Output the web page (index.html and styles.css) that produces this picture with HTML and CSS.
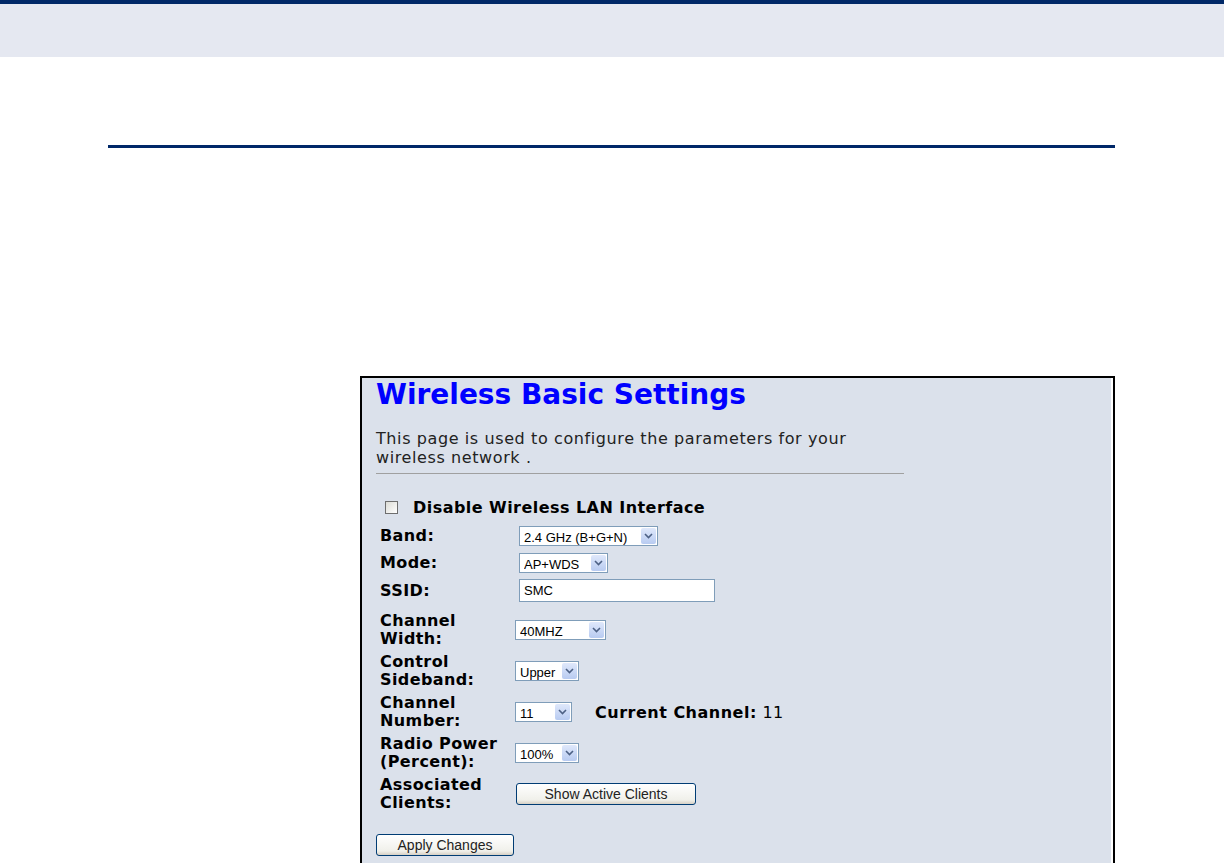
FILE: index.html
```html
<!DOCTYPE html>
<html lang="en">
<head>
    <meta charset="UTF-8">
    <title>Wireless Basic Settings</title>
    <link rel="stylesheet" href="styles.css">
</head>
<body>
    <div class="top-band"></div>
    <div class="page">
        <div class="rule"></div>
        <div class="shot">
            <div class="shot-inner">
                <h1>Wireless Basic Settings</h1>
                <p class="intro">This page is used to configure the parameters for your<br>wireless network .</p>
                <hr>
                <label class="disable-row">
                    <input type="checkbox" class="check">
                    <span>Disable Wireless LAN Interface</span>
                </label>
                <div class="form-grid first">
                    <div class="lbl">Band:</div>
                    <div class="ctl">
                        <span class="select w-band">
                            <select><option>2.4 GHz (B+G+N)</option></select>
                            <span class="arrow"><svg width="9" height="6" viewBox="0 0 9 6"><path d="M1 1 L4.5 4.5 L8 1" fill="none" stroke="#4d6185" stroke-width="1.6"/></svg></span>
                        </span>
                    </div>
                    <div class="lbl">Mode:</div>
                    <div class="ctl">
                        <span class="select w-mode">
                            <select><option>AP+WDS</option></select>
                            <span class="arrow"><svg width="9" height="6" viewBox="0 0 9 6"><path d="M1 1 L4.5 4.5 L8 1" fill="none" stroke="#4d6185" stroke-width="1.6"/></svg></span>
                        </span>
                    </div>
                    <div class="lbl">SSID:</div>
                    <div class="ctl"><input type="text" class="text-in" value="SMC"></div>
                </div>
                <div class="form-grid second">
                    <div class="lbl">Channel<br>Width:</div>
                    <div class="ctl">
                        <span class="select w-width">
                            <select><option>40MHZ</option></select>
                            <span class="arrow"><svg width="9" height="6" viewBox="0 0 9 6"><path d="M1 1 L4.5 4.5 L8 1" fill="none" stroke="#4d6185" stroke-width="1.6"/></svg></span>
                        </span>
                    </div>
                    <div class="lbl">Control<br>Sideband:</div>
                    <div class="ctl">
                        <span class="select w-side">
                            <select><option>Upper</option></select>
                            <span class="arrow"><svg width="9" height="6" viewBox="0 0 9 6"><path d="M1 1 L4.5 4.5 L8 1" fill="none" stroke="#4d6185" stroke-width="1.6"/></svg></span>
                        </span>
                    </div>
                    <div class="lbl">Channel<br>Number:</div>
                    <div class="ctl">
                        <span class="select w-chan">
                            <select><option>11</option></select>
                            <span class="arrow"><svg width="9" height="6" viewBox="0 0 9 6"><path d="M1 1 L4.5 4.5 L8 1" fill="none" stroke="#4d6185" stroke-width="1.6"/></svg></span>
                        </span>
                        <span class="current"><b>Current Channel:</b> 11</span>
                    </div>
                    <div class="lbl">Radio Power<br>(Percent):</div>
                    <div class="ctl">
                        <span class="select w-power">
                            <select><option>100%</option></select>
                            <span class="arrow"><svg width="9" height="6" viewBox="0 0 9 6"><path d="M1 1 L4.5 4.5 L8 1" fill="none" stroke="#4d6185" stroke-width="1.6"/></svg></span>
                        </span>
                    </div>
                    <div class="lbl">Associated<br>Clients:</div>
                    <div class="ctl"><button class="btn w-clients">Show Active Clients</button></div>
                </div>
                <button class="btn w-apply">Apply Changes</button>
            </div>
        </div>
    </div>
</body>
</html>
```

FILE: styles.css
```css
body {
    margin: 0;
    background-color: #fff;
    font-family: "DejaVu Sans", Verdana, sans-serif;
    color: #000;
}
.top-band {
    height: 53px;
    border-top: 4px solid #002868;
    background-color: #e5e8f1;
}
.page {
    padding-left: 108px;
    padding-top: 88px;
}
.rule {
    width: 1007px;
    border-top: 3px solid #002868;
}
.shot {
    margin-left: 252px;
    margin-top: 228px;
    width: 751px;
    height: 486px;
    border: 2px solid #000;
    border-bottom: none;
    background-color: #fff;
    overflow: hidden;
}
.shot-inner {
    height: 100%;
    margin-right: 2px;
    background-color: #dbe1eb;
    padding-left: 14px;
    box-sizing: border-box;
}
h1 {
    margin: 0;
    padding-top: 0;
    font-size: 28px;
    line-height: 34px;
    font-weight: bold;
    color: #0000ff;
}
.intro {
    margin: 17px 0 0;
    font-size: 16px;
    letter-spacing: 0.6px;
    line-height: 19px;
    color: #222;
}
hr {
    width: 528px;
    margin: 6px 0 0;
    border: none;
    border-top: 1px solid #a0a0a0;
}
.disable-row {
    display: flex;
    align-items: center;
    margin: 24px 0 0 9px;
    font-size: 16px;
    letter-spacing: 0.45px;
    font-weight: bold;
}
.check {
    width: 13px;
    height: 13px;
    margin: 0 15px 0 0;
    appearance: none;
    border: 1px solid #6e6e6e;
    background: linear-gradient(135deg, #dcdcd6, #fff);
}
.form-grid {
    display: grid;
    grid-template-columns: 138px auto;
    align-items: center;
    row-gap: 5px;
    margin-left: 4px;
    font-size: 16px;
    letter-spacing: 0.4px;
}
.form-grid.first {
    margin-top: 8px;
}
.form-grid.second {
    grid-template-columns: 135px auto;
    row-gap: 5px;
    margin-top: 10px;
}
.lbl {
    font-weight: bold;
    line-height: 18px;
}
.ctl {
    display: flex;
    align-items: center;
    min-height: 22px;
    letter-spacing: 0;
}
.select {
    position: relative;
    display: inline-block;
    height: 20px;
    box-sizing: border-box;
    border: 1px solid #7f9db9;
    background-color: #fff;
}
.select select {
    appearance: none;
    border: none;
    background: transparent;
    width: 100%;
    height: 18px;
    padding: 0 0 0 4px;
    font-family: "Liberation Sans", Arial, sans-serif;
    font-size: 13px;
    color: #000;
}
.select .arrow {
    position: absolute;
    top: 1px;
    right: 1px;
    bottom: 1px;
    width: 15px;
    display: flex;
    align-items: center;
    justify-content: center;
    border-radius: 2px;
    background: linear-gradient(#dfe8fb, #b8cbf1);
}
.first .select,
.first .text-in {
    margin-left: 1px;
}
.w-band { width: 139px; }
.w-mode { width: 89px; }
.w-width { width: 91px; }
.w-side { width: 64px; }
.w-chan { width: 57px; }
.w-power { width: 64px; }
.text-in {
    width: 196px;
    height: 23px;
    box-sizing: border-box;
    border: 1px solid #7f9db9;
    padding: 0 4px;
    font-family: "Liberation Sans", Arial, sans-serif;
    font-size: 13px;
}
.current {
    margin-left: 23px;
    font-size: 16px;
    letter-spacing: 0.5px;
}
.btn {
    height: 22px;
    border: 1px solid #003c74;
    border-radius: 3px;
    background: linear-gradient(#fff, #f0f0ea 80%, #d6d0c5);
    font-family: "Liberation Sans", Arial, sans-serif;
    font-size: 14px;
    color: #222;
    padding: 0;
}
.w-clients {
    width: 180px;
    margin-left: 1px;
}
.w-apply {
    width: 138px;
    margin-top: 22px;
    margin-left: 0;
}
```
